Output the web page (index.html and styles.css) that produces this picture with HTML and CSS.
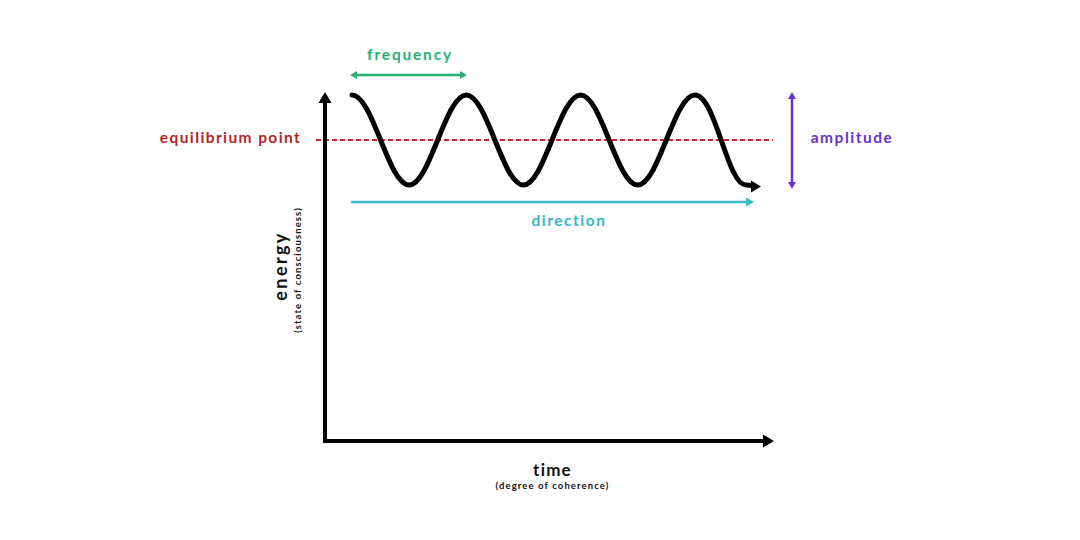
FILE: index.html
```html
<!DOCTYPE html>
<html>
<head>
<meta charset="utf-8">
<link rel="stylesheet" href="styles.css">
</head>
<body>
<div class="canvas">
<svg class="chart" width="1080" height="540" viewBox="0 0 1080 540" xmlns="http://www.w3.org/2000/svg">
  <!-- equilibrium dashed line -->
  <line class="eq-line" x1="316" y1="140" x2="773" y2="140"/>
  <!-- axes -->
  <path class="axis" d="M325 101 L325 441 L765 441"/>
  <polygon class="axis-head" points="325,92 318.5,103 331.5,103"/>
  <polygon class="axis-head" points="774,441 763,434.5 763,447.5"/>
  <!-- wave -->
  <path class="wave" d="M352 95 C372.8 95 388.3 185 409.1 185 S445.5 95 466.3 95 S502.6 185 523.4 185 S559.8 95 580.6 95 S616.9 185 637.7 185 S674.1 95 694.9 95 S727 185 746 185 L752 185.5"/>
  <polygon class="wave-head" points="761,186.5 751,180.5 751,192.5"/>
  <!-- frequency arrow -->
  <line class="freq" x1="356" y1="75" x2="461" y2="75"/>
  <polygon class="freq-head" points="350,75 357,71 357,79"/>
  <polygon class="freq-head" points="467,75 460,71 460,79"/>
  <!-- direction arrow -->
  <line class="dir" x1="351" y1="202" x2="747" y2="202"/>
  <polygon class="dir-head" points="754,202 746,197.5 746,206.5"/>
  <!-- amplitude arrow -->
  <line class="amp" x1="792" y1="98" x2="792" y2="183"/>
  <polygon class="amp-head" points="792,92 788,99 796,99"/>
  <polygon class="amp-head" points="792,189 788,182 796,182"/>
  <!-- labels -->
  <text class="lbl lbl-freq" x="410" y="60">frequency</text>
  <text class="lbl lbl-eq" x="230.5" y="143">equilibrium point</text>
  <text class="lbl lbl-amp" x="852" y="143">amplitude</text>
  <text class="lbl lbl-dir" x="569" y="226">direction</text>
  <text class="lbl lbl-axis" x="552.5" y="476">time</text>
  <text class="lbl lbl-sub" x="552.5" y="489">(degree of coherence)</text>
  <text class="lbl lbl-axis lbl-energy" transform="translate(287 266) rotate(-90)">energy</text>
  <text class="lbl lbl-sub" transform="translate(301 270) rotate(-90)">(state of consciousness)</text>
</svg>
</div>
</body>
</html>
```

FILE: styles.css
```css
html, body {
  margin: 0;
  padding: 0;
  background: #ffffff;
}
.canvas {
  width: 1080px;
  height: 540px;
  overflow: hidden;
}
.chart {
  display: block;
}
.eq-line {
  stroke: #c8282c;
  stroke-width: 2;
  stroke-dasharray: 5 3;
}
.axis {
  fill: none;
  stroke: #000;
  stroke-width: 4;
  stroke-linejoin: miter;
}
.axis-head, .wave-head {
  fill: #000;
}
.wave {
  fill: none;
  stroke: #000;
  stroke-width: 5;
  stroke-linecap: round;
}
.freq {
  stroke: #27ad73;
  stroke-width: 2.5;
}
.freq-head { fill: #27ad73; }
.dir {
  stroke: #3bbcc9;
  stroke-width: 2.5;
}
.dir-head { fill: #3bbcc9; }
.amp {
  stroke: #6634cc;
  stroke-width: 2.5;
}
.amp-head { fill: #6634cc; }
.lbl {
  font-family: "Lato", "Open Sans", sans-serif;
  font-weight: 700;
  text-anchor: middle;
}
.lbl-freq {
  fill: #2aae74;
  font-size: 15.5px;
  letter-spacing: 1.8px;
}
.lbl-eq {
  fill: #b82329;
  font-size: 15.5px;
  letter-spacing: 1.4px;
}
.lbl-amp {
  fill: #6633cc;
  font-size: 15.5px;
  letter-spacing: 1.5px;
}
.lbl-dir {
  fill: #35b8c6;
  font-size: 15.5px;
  letter-spacing: 1.5px;
}
.lbl-axis {
  fill: #111;
  font-size: 17px;
  letter-spacing: 1.2px;
}
.lbl-energy {
  font-size: 18px;
  letter-spacing: 2.4px;
}
.lbl-sub {
  fill: #111;
  font-size: 9.5px;
  letter-spacing: 1.1px;
}
```
